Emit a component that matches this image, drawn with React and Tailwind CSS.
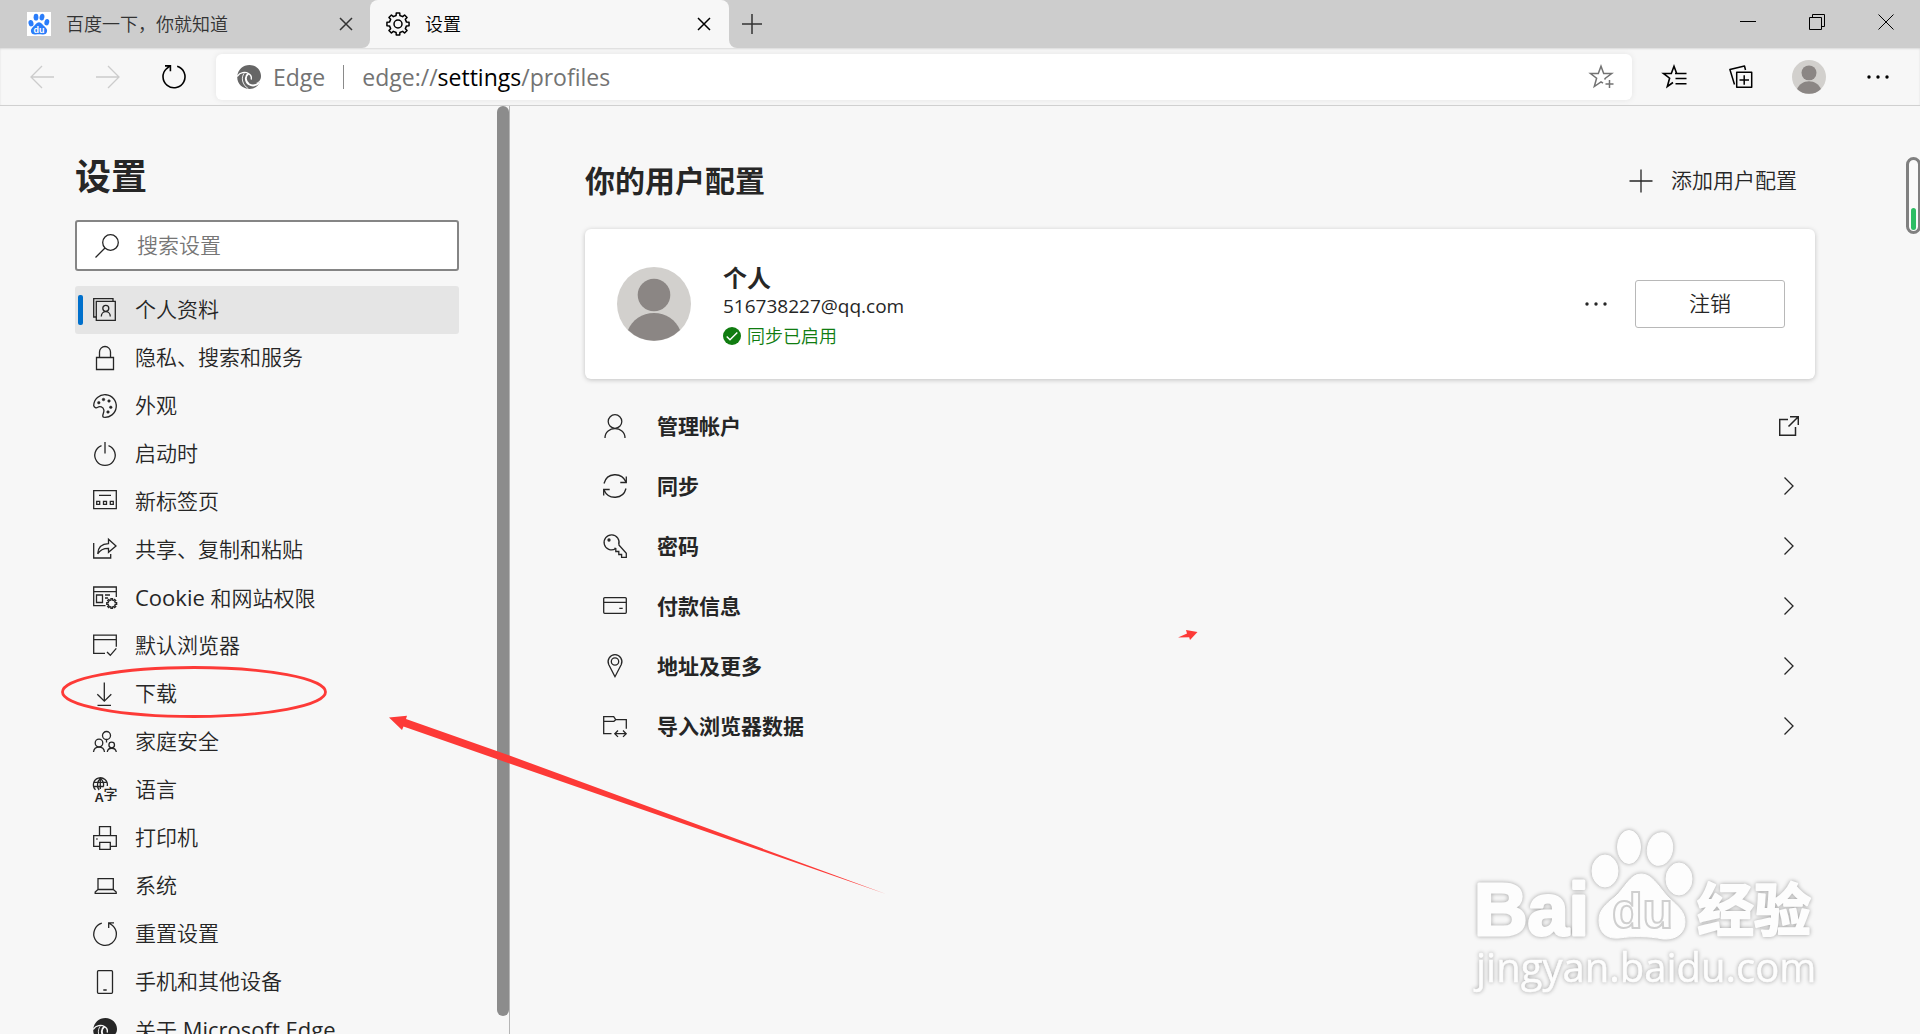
import { useState } from 'react';

function gearPath(cx, cy, outer, inner, teeth) {
  const step = (Math.PI * 2) / teeth;
  const points = [];
  for (let i = 0; i < teeth; i += 1) {
    const a = i * step - Math.PI / 2;
    [
      [outer, -0.2],
      [outer, 0.2],
      [inner, 0.28],
      [inner, 0.72],
    ].forEach(([r, t]) => {
      points.push(`${(cx + r * Math.cos(a + t * step)).toFixed(2)} ${(cy + r * Math.sin(a + t * step)).toFixed(2)}`);
    });
  }
  return `M${points.join('L')}Z`;
}

function Icon({ children, className = 'size-6 shrink-0 overflow-visible', strokeWidth = 1.3 }) {
  return (
    <svg viewBox="0 0 24 24" className={className} fill="none" stroke="currentColor" strokeWidth={strokeWidth} aria-hidden="true">
      {children}
    </svg>
  );
}

function EdgeLogo({ className, cut }) {
  return (
    <svg viewBox="0 0 24 24" className={className} aria-hidden="true">
      <path d="M.3 11C1 4.500 6 0 12.500 0 19 0 24 5 24 11c0 4-2.200 6.500-5 6.500 1.500.5 3 .2 4-.8C21.500 21 17.500 24 12.500 24 5.500 24-.500 18.500.3 11Z" fill="currentColor" />
      <g fill="none" stroke={cut} strokeLinecap="round">
        <path d="M.5 11C3 7.500 8 6.500 11.500 8.500c2.300 1.300 3.200 3.500 2.700 5.500" strokeWidth="1.300" />
        <path d="M11 9C8 11 8 16.500 12 19.200c3 1.900 6.800 1.300 10-1.200" strokeWidth="1.900" />
        <path d="M7 8.500C3.800 12.500 5 19.500 11 23.500" strokeWidth="0.900" />
      </g>
    </svg>
  );
}

function Avatar({ className }) {
  return (
    <svg viewBox="0 0 74 74" className={className} aria-hidden="true">
      <circle cx="37" cy="37" r="37" fill="#d2d0cd" />
      <circle cx="37" cy="28" r="16.300" fill="#8b8684" />
      <path d="M11 63C15 53 25 46 37 46s22 7 26 17A37 37 0 0 1 11 63Z" fill="#8b8684" />
    </svg>
  );
}

function PawIcon() {
  return (
    <svg viewBox="0 0 24 24" className="size-6 shrink-0 bg-white" aria-hidden="true">
      <g fill="#2a7dfa">
        <ellipse cx="4" cy="11.200" rx="2.500" ry="3.200" transform="rotate(-12 4 11.200)" />
        <ellipse cx="9" cy="5.200" rx="2.400" ry="3.400" />
        <ellipse cx="15" cy="5.200" rx="2.400" ry="3.400" transform="rotate(10 15 5.200)" />
        <ellipse cx="19.800" cy="10.200" rx="2.400" ry="3.200" transform="rotate(12 19.800 10.200)" />
        <path d="M12 10.200c2.500 0 3.600 2.600 5.600 4.300 2.200 1.900 3 3.500 2.300 5.600-.7 2.200-2.700 2.700-4.500 2.400-2.300-.3-4.500-.3-6.800 0-1.800.3-3.900-.2-4.500-2.400-.6-2.100.2-3.700 2.300-5.600 2-1.700 3.100-4.300 5.600-4.300Z" />
      </g>
      <text x="12" y="21" textAnchor="middle" fontSize="9" fontWeight="700" fill="#fff" fontFamily="Liberation Sans, sans-serif">du</text>
    </svg>
  );
}

const menuItems = [
  {
    label: '个人资料',
    icon: (
      <>
        <path d="M20 3.300V.7H.7V19h2.600" />
        <path d="M3.300 3.300h19v19h-19Z" />
        <circle cx="12.800" cy="10.300" r="3" />
        <path d="M8.300 18.500c0-6.500 9-6.500 9 0" />
      </>
    ),
  },
  { label: '隐私、搜索和服务', icon: <path d="M3.500 11.500h17v12h-17ZM6.500 11.500V6a5.500 5.500 0 0 1 11 0v5.500" /> },
  {
    label: '外观',
    icon: (
      <>
        <path d="M.7 11.500a11.300 11.300 0 1 1 9.800 11.700c-2.300-1.200.9-4.200.4-7.100-.5-3.400-4.200-4.200-6.200-2.800-1.500 1-3.500.4-4-1.800Z" />
        <g fill="currentColor" strokeWidth="0.500">
          <circle cx="5.800" cy="8.700" r="1.300" />
          <circle cx="10.500" cy="5.500" r="1.300" />
          <circle cx="16" cy="7" r="1.300" />
          <circle cx="17.800" cy="13.300" r="1.300" />
          <circle cx="15" cy="18" r="1.300" />
        </g>
      </>
    ),
  },
  { label: '启动时', icon: <path d="M8.500 3.600a10.200 10.200 0 1 0 7 0M12 0v11.500" /> },
  {
    label: '新标签页',
    icon: <path d="M.7.700h22.600v18H.7ZM6 5.300h12M3.700 11.300h3v3h-3ZM10.500 11.300h3v3h-3ZM17.300 11.300h3v3h-3Z" />,
  },
  {
    label: '共享、复制和粘贴',
    icon: <path d="M.7 5v15h17v-4M4.700 15.800C5 9 9 5.800 15.500 5.600V1.200L23 8l-7.500 6.300v-4C10 10.200 7 12 4.700 15.800Z" />,
  },
  {
    label: (
      <>
        <span className="text-[22px] font-normal">Cookie </span>和网站权限
      </>
    ),
    icon: (
      <>
        <path d="M12.500 19.700H.7V1h22.600v10M.7 5.700h22.600M3.500 9h6v7.500h-6ZM12 9h5M12 12h3" />
        <path d={gearPath(18.700, 17.500, 5, 3.600, 8)} />
      </>
    ),
  },
  { label: '默认浏览器', icon: <path d="M12 19.300H.7V1.200h22.600v11.500M.7 5.700h22.600M14 18l3.300 3.300 6-7" /> },
  { label: '下载', icon: <path d="M11.300.500v18.500M4.300 12.300l7 6.900 7-6.900M4.500 23.300h13.500" />, marked: true },
  {
    label: '家庭安全',
    icon: (
      <>
        <circle cx="13.500" cy="5.500" r="4" />
        <circle cx="6" cy="13" r="3.800" />
        <circle cx="18.700" cy="15" r="2.800" />
        <path d="M.5 22c.8-6.500 10.200-6.500 11 0M14.300 22c.6-5 8.200-5 9 0M13.500 9.500v3" />
      </>
    ),
  },
  {
    label: '语言',
    icon: (
      <>
        <path d="M14.300 8A7 7 0 1 0 2.500 11.800M7.300.5c-3.500 3-3.500 8.500-1.200 11.500M7.300.5c2.700 2 3.700 5 3.200 8M7.300.5V11M1.300 4.300h12M.7 8.500h10" />
        <text x="1.500" y="23.500" fontSize="13" fontWeight="700" fill="currentColor" stroke="none" fontFamily="Liberation Sans, sans-serif">A</text>
        <text x="10.500" y="21" fontSize="14" fontWeight="500" fill="currentColor" stroke="none" fontFamily="Noto Sans CJK SC, sans-serif">字</text>
      </>
    ),
  },
  { label: '打印机', icon: <path d="M6.500 9.500V.7h11v8.800M6.500 20.300H.7V9.700h22.600v10.600h-5.800M6.700 16.300h10.600v7H6.700ZM3.300 13h1.300" /> },
  { label: '系统', icon: <path d="M5 4.700h15.300v10.800H5ZM5 15.500 2.200 18v1.300h21V18l-2.900-2.500" /> },
  { label: '重置设置', icon: <path d="M8.800 1.200a11.300 11.300 0 1 0 10.700 2.300L16 .9M15.700 6V.8h5.300" /> },
  { label: '手机和其他设备', icon: <path d="M5.500.7h13a1 1 0 0 1 1 1v20.600a1 1 0 0 1-1 1h-13a1 1 0 0 1-1-1V1.700a1 1 0 0 1 1-1ZM10.300 20h3.400" /> },
  {
    label: (
      <>
        关于<span className="text-[22px] font-normal"> Microsoft Edge</span>
      </>
    ),
    edge: true,
  },
];

const profileRows = [
  {
    label: '管理帐户',
    external: true,
    icon: (
      <>
        <circle cx="12" cy="7.500" r="6.800" />
        <path d="M2 24c0-12.500 20-12.500 20 0" />
      </>
    ),
  },
  { label: '同步', icon: <path d="M1 9.500C3.800-1.500 18.500-2.300 23 8M23.300 2.500v6h-6M23 14.500c-2.800 11-17.500 11.800-22 1.500M.7 21.500v-6h6" /> },
  {
    label: '密码',
    icon: (
      <>
        <path d="M15.700 10.800l7.600 8.500v4h-4.700v-2.800h-2.800v-3h-3v-3l-1.400-.3" />
        <path d="M12.500 14.800A7.500 7.500 0 1 1 15.700 10.800" />
        <circle cx="6" cy="6" r="1" fill="currentColor" />
      </>
    ),
  },
  { label: '付款信息', icon: <path d="M1.700 3.700h20.600a1 1 0 0 1 1 1v13.600a1 1 0 0 1-1 1H1.700a1 1 0 0 1-1-1V4.700a1 1 0 0 1 1-1ZM.7 8.300h22.600M16.300 14.300h3.400" /> },
  {
    label: '地址及更多',
    icon: (
      <>
        <path d="M12 22.700 5.700 10.500c-2-4.500 1.300-9.800 6.300-9.800s8.300 5.300 6.300 9.800Z" />
        <circle cx="12" cy="7.500" r="3.700" />
      </>
    ),
  },
  { label: '导入浏览器数据', icon: <path d="M8.500 19.700H.7V2.700h10l2 3h10.600v9M.7 7.300h10.200l1.800-1.600M12 19.700h11M15 16.500l-3.200 3.200 3.200 3.200M20 16.500l3.200 3.200-3.200 3.200" /> },
];

function CloseGlyph() {
  return (
    <svg viewBox="0 0 14 14" className="size-[14px]" fill="none" stroke="currentColor" strokeWidth="1.500" aria-hidden="true">
      <path d="M1 1l12 12M13 1 1 13" />
    </svg>
  );
}

function Dots() {
  return (
    <svg viewBox="0 0 22 4" className="h-1 w-[22px]" fill="currentColor" aria-hidden="true">
      <circle cx="2" cy="2" r="1.700" />
      <circle cx="11" cy="2" r="1.700" />
      <circle cx="20" cy="2" r="1.700" />
    </svg>
  );
}

function TabStrip() {
  return (
    <div className="flex h-12 shrink-0 bg-[#cdcdcd] text-lg font-[350] text-[#333]">
      <div className="flex w-[370px] items-center pr-[17px] pl-[27px]">
        <PawIcon />
        <span className="ml-[15px] grow">百度一下，你就知道</span>
        <button type="button" aria-label="关闭标签页"><CloseGlyph /></button>
      </div>
      <div className="relative flex w-[359px] items-center rounded-t-lg bg-[#f7f7f7] pr-[18px] pl-4 text-black">
        <span className="absolute bottom-0 -left-2 size-2 bg-[#f7f7f7]"><span className="block size-2 rounded-br-lg bg-[#cdcdcd]" /></span>
        <span className="absolute -right-2 bottom-0 size-2 bg-[#f7f7f7]"><span className="block size-2 rounded-bl-lg bg-[#cdcdcd]" /></span>
        <Icon strokeWidth={1.500}>
          <path d={gearPath(12, 12, 11.200, 8.700, 8)} strokeLinejoin="round" />
          <circle cx="12" cy="12" r="4" />
        </Icon>
        <span className="ml-[15px] grow">设置</span>
        <button type="button" aria-label="关闭标签页"><CloseGlyph /></button>
      </div>
      <button type="button" aria-label="新建标签页" className="ml-3">
        <svg viewBox="0 0 22 22" className="size-[22px]" stroke="currentColor" strokeWidth="1.500" aria-hidden="true">
          <path d="M11 1v20M1 11h20" />
        </svg>
      </button>
      <div className="ml-auto flex items-center gap-[53px] pr-[26px] pb-1 text-black">
        <button type="button" aria-label="最小化">
          <svg viewBox="0 0 16 16" className="size-4" stroke="currentColor" aria-hidden="true"><path d="M0 7.500h16" /></svg>
        </button>
        <button type="button" aria-label="还原">
          <svg viewBox="0 0 16 16" className="size-4" fill="none" stroke="currentColor" aria-hidden="true">
            <path d="M.500 3.500h12v12H.500ZM3.500 3.500v-3h12v12h-3" />
          </svg>
        </button>
        <button type="button" aria-label="关闭">
          <svg viewBox="0 0 16 16" className="size-4" stroke="currentColor" aria-hidden="true"><path d="M.500.500l15 15M15.500.500l-15 15" /></svg>
        </button>
      </div>
    </div>
  );
}

function Toolbar() {
  return (
    <div className="flex h-[58px] shrink-0 items-center border-b border-[#d0d0d0] bg-[#f7f7f7] pr-[31px] pl-[30px] shadow-[inset_0_1px_2px_rgba(0,0,0,0.12)]">
      <div className="flex gap-[42px]">
        <button type="button" aria-label="后退" disabled className="text-[#ccc]"><Icon><path d="M24 12H1M12 1 1 12l11 11" /></Icon></button>
        <button type="button" aria-label="前进" disabled className="text-[#ccc]"><Icon><path d="M0 12h23M12 1l11 11-11 11" /></Icon></button>
        <button type="button" aria-label="刷新" className="text-black">
          <Icon strokeWidth={1.600}><path d="M15.200 1.200A11 11 0 1 1 4.700 3.500L8 .9M3 .9h5.400V6.300" /></Icon>
        </button>
      </div>
      <div className="ml-[30px] flex h-[46px] grow items-center rounded-md bg-white pr-[18px] pl-[21px] text-[23px] text-[#737373] shadow-[0_0_6px_rgba(0,0,0,0.08)]">
        <EdgeLogo className="size-6 text-[#666]" cut="#fff" />
        <span className="ml-3 pt-0.5">Edge</span>
        <span className="mx-[18px] h-6 w-px bg-[#8a8a8a]" />
        <button type="button" aria-label="地址栏" className="grow pt-0.5 text-left">
          edge://<span className="text-black">settings</span>/profiles
        </button>
        <button type="button" aria-label="添加到收藏夹">
          <Icon strokeWidth={1.500}>
            <path d="M14.500 14.500 15.400 13.200 21.700 8.500h-8L11 1.200 8.300 8.500H.500l6.100 4.700-2.300 8.300L11 16.800l2 1.400" />
            <path d="M19.500 15v8M15.500 19h8" />
          </Icon>
        </button>
      </div>
      <div className="ml-[31px] flex items-center text-black">
        <button type="button" aria-label="收藏夹">
          <Icon strokeWidth={1.600}>
            <path d="M15 8.500h-1.300L11 1.200 8.300 8.500H.500l6.100 4.700-2.300 8.300 5.700-4M12 8.500h11.500M12.500 13.500h11M12.500 18.700h11" />
          </Icon>
        </button>
        <button type="button" aria-label="集锦" className="ml-[42px]">
          <Icon strokeWidth={1.500}>
            <path d="M7.700 7.300h15v15h-15ZM15.200 10.300v9.500M10.500 15h9.500M5.500 19.500.900 4.500 15.500 1l1 4" strokeLinejoin="round" />
          </Icon>
        </button>
        <button type="button" aria-label="用户" className="ml-[39px]"><Avatar className="size-[34px]" /></button>
        <button type="button" aria-label="设置及其他" className="ml-[41px]"><Dots /></button>
      </div>
    </div>
  );
}

function Sidebar() {
  const [active, setActive] = useState(0);
  const [query, setQuery] = useState('');

  return (
    <aside className="flex w-[510px] shrink-0 border-r border-[#b5b5b5]">
      <div className="min-w-0 grow overflow-hidden pr-[38px] pl-[60px]">
        <h1 className="mt-[47px] ml-[15px] text-4xl leading-[48px] font-bold">设置</h1>
        <label className="mt-[19px] ml-[15px] flex h-[51px] items-center rounded-[3px] border-2 border-[#858585] bg-white pl-[18px]">
          <Icon>
            <circle cx="15.500" cy="8.500" r="7.800" />
            <path d="M10 14 .500 23.500" />
          </Icon>
          <input
            type="text"
            aria-label="搜索设置"
            value={query}
            onChange={(event) => setQuery(event.target.value)}
            placeholder="搜索设置"
            className="ml-[18px] min-w-0 grow text-[21px] font-[350] outline-none placeholder:text-[#767676]"
          />
        </label>
        <nav className="mt-[15px] ml-[15px]">
          {menuItems.map((item, index) => (
            <a
              key={index}
              href="#"
              onClick={(event) => {
                event.preventDefault();
                setActive(index);
              }}
              className={`relative flex h-12 items-center rounded-[3px] text-[21px] font-[350] ${active === index ? 'bg-[#e5e5e5]' : ''}`}
            >
              <span className={`ml-[3px] h-[30px] w-[5px] rounded-xs ${active === index ? 'bg-[#0070cc]' : ''}`} />
              <span className="mr-[18px] ml-[10px]">
                {item.edge ? <EdgeLogo className="size-6" cut="#f7f7f7" /> : <Icon>{item.icon}</Icon>}
              </span>
              <span>{item.label}</span>
              {item.marked ? (
                <svg viewBox="0 0 266 53" className="pointer-events-none absolute -top-1 -left-[14px] h-[53px] w-[266px]" fill="none" aria-hidden="true">
                  <ellipse cx="133" cy="26" rx="131.500" ry="24.500" stroke="#fd3a37" strokeWidth="2.800" />
                </svg>
              ) : null}
            </a>
          ))}
        </nav>
      </div>
      <div className="mb-[18px] w-3 shrink-0 rounded-full bg-[#8c8c8c]" />
    </aside>
  );
}

function ProfileCard() {
  return (
    <section className="mt-6 flex h-[150px] items-center rounded-md bg-white pr-[30px] pl-8 shadow-[0_1px_5px_rgba(0,0,0,0.22)]">
      <Avatar className="size-[74px]" />
      <div className="ml-8 grow pt-1.5">
        <h3 className="text-2xl leading-7 font-bold">个人</h3>
        <p className="text-[19px] leading-7">516738227@qq.com</p>
        <p className="mt-0.5 flex items-center gap-[6px] text-lg leading-7 font-[350] text-[#107c10]">
          <svg viewBox="0 0 18 18" className="size-[18px]" aria-hidden="true">
            <circle cx="9" cy="9" r="9" fill="#107c10" />
            <path d="M3.700 9.500l3.300 3.200 7.300-7.200" fill="none" stroke="#fff" strokeWidth="1.400" />
          </svg>
          同步已启用
        </p>
      </div>
      <button type="button" aria-label="更多操作"><Dots /></button>
      <button type="button" className="ml-7 h-12 w-[150px] rounded-[3px] border border-[#b8b8b8] text-[21px] font-[350]">注销</button>
    </section>
  );
}

function Watermark() {
  return (
    <svg viewBox="0 0 360 180" className="pointer-events-none absolute right-[90px] bottom-[24px] h-[180px] w-[360px] overflow-visible" aria-hidden="true">
      <g className="drop-shadow-[0_0_2px_rgba(0,0,0,0.35)]" fill="#fdfdfd" stroke="#fdfdfd" strokeLinejoin="round">
        <text x="4" y="105" fontSize="74" fontWeight="700" strokeWidth="3" fontFamily="Liberation Sans, sans-serif">Bai</text>
        <ellipse cx="135" cy="41" rx="13" ry="16" />
        <ellipse cx="159" cy="17" rx="11.500" ry="16.500" />
        <ellipse cx="190" cy="19" rx="12.500" ry="16.500" transform="rotate(12 190 19)" />
        <ellipse cx="209" cy="49" rx="13" ry="16" />
        <path d="M171 44c12 0 18 14 28 24 10 9 16 14 16 24 0 12-10 18-22 17-15-3-30-3-44-1-11 1-20-4-20-18 0-10 7-16 16-23 10-9 15-23 26-23Z" />
        <text x="227" y="101" fontSize="57" fontWeight="700" strokeWidth="2" fontFamily="Noto Sans CJK SC, sans-serif">经验</text>
        <text x="6" y="152" fontSize="40" strokeWidth="0.500" fontFamily="Open Sans, sans-serif">jingyan.baidu.com</text>
      </g>
      <text x="142" y="98" fontSize="50" fontWeight="700" fill="#fdfdfd" stroke="#cfcfcf" strokeWidth="2" fontFamily="Liberation Sans, sans-serif">du</text>
    </svg>
  );
}

function Profiles() {
  return (
    <main className="min-w-0 grow pr-[105px] pl-[75px]">
      <div className="mt-[51px] flex h-12 items-center justify-between">
        <h2 className="text-3xl font-bold">你的用户配置</h2>
        <button type="button" className="flex items-center gap-[18px] pr-[18px] text-[21px] font-[350]">
          <Icon><path d="M12 .500v23M.500 12h23" /></Icon>
          添加用户配置
        </button>
      </div>
      <ProfileCard />
      <ul className="mt-[17px]">
        {profileRows.map((row) => (
          <li key={row.label}>
            <button type="button" className="flex h-[60px] w-full items-center pr-4 pl-[18px] text-left text-[21px] font-bold">
              <Icon>{row.icon}</Icon>
              <span className="ml-[30px] grow pt-0.5">{row.label}</span>
              {row.external ? (
                <svg viewBox="0 0 20 20" className="size-5" fill="none" stroke="currentColor" strokeWidth="1.500" aria-hidden="true">
                  <path d="M9 3.500H.700v15.800h15.800V11M11 .800h8.300V9M19.300.800 9.500 10.500" />
                </svg>
              ) : (
                <svg viewBox="0 0 20 20" className="size-5" fill="none" stroke="currentColor" strokeWidth="1.300" aria-hidden="true">
                  <path d="M5.500 1.500 14 10l-8.500 8.500" />
                </svg>
              )}
            </button>
          </li>
        ))}
      </ul>
    </main>
  );
}

function Annotations() {
  return (
    <>
      <svg viewBox="0 0 500 180" className="pointer-events-none absolute top-[715px] left-[388px] h-[180px] w-[500px]" fill="#fd3a37" aria-hidden="true">
        <path d="M1 2.500 19 .800 18 4 121.500 40.500 498 179 121.500 48.500 15.500 11.500 14 15Z" />
      </svg>
      <svg viewBox="0 0 20 12" className="pointer-events-none absolute top-[629px] left-[1178px] h-3 w-5" fill="#fd3a37" aria-hidden="true">
        <path d="M0 8.500 9 4.500 8 1l11.500 2L12 11l-.800-2.800Z" />
      </svg>
      <div className="pointer-events-none absolute top-[157px] -right-px flex h-[77px] w-[15px] items-end justify-center rounded-full border-[3px] border-[#808080] bg-[#fafafa] pb-px">
        <span className="h-[22px] w-[5px] rounded-full bg-[#2dbd63]" />
      </div>
    </>
  );
}

export default function App() {
  return (
    <div className="relative flex h-screen flex-col overflow-hidden bg-[#f7f7f7] font-['Open_Sans','Noto_Sans_CJK_SC',sans-serif] text-[#262626]">
      <TabStrip />
      <Toolbar />
      <div className="flex min-h-0 grow">
        <Sidebar />
        <Profiles />
      </div>
      <Watermark />
      <Annotations />
    </div>
  );
}
